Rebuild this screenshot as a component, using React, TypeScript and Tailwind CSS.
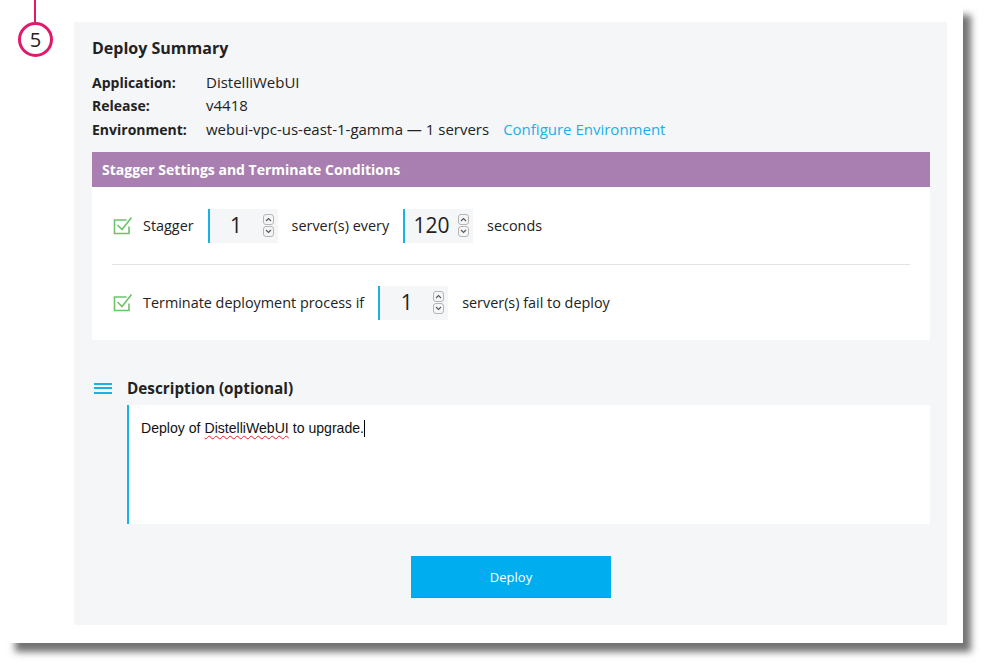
import React from 'react';

function CheckIcon() {
  return (
    <svg width="20" height="19" viewBox="0 0 20 19" fill="none" className="shrink-0 ml-[1px]">
      <path d="M13.5 4H1.5V17.5H16V10.5" stroke="#6cc36c" strokeWidth="1.6" />
      <path d="M4.5 9L9 13.5L18.5 1.5" stroke="#6cc36c" strokeWidth="1.6" />
    </svg>
  );
}

function Spinner() {
  return (
    <div className="flex flex-col gap-[1px]">
      <div className="w-[11px] h-[11px] rounded-[3px] border border-[#b5b5b5] flex items-center justify-center">
        <svg width="7" height="5" viewBox="0 0 7 5" fill="none">
          <path d="M1 4L3.5 1.5L6 4" stroke="#555" strokeWidth="1.1" />
        </svg>
      </div>
      <div className="w-[11px] h-[11px] rounded-[3px] border border-[#b5b5b5] flex items-center justify-center">
        <svg width="7" height="5" viewBox="0 0 7 5" fill="none">
          <path d="M1 1L3.5 3.5L6 1" stroke="#555" strokeWidth="1.1" />
        </svg>
      </div>
    </div>
  );
}

function NumberBox({ value }: { value: string }) {
  return (
    <div className="w-[70px] h-[34px] bg-[#f5f6f8] border-l-2 border-[#1ab0e8] flex items-center pr-[4px]">
      <span className="flex-1 text-center text-[21px] text-[#222] leading-none">{value}</span>
      <Spinner />
    </div>
  );
}

export default function App() {
  return (
    <div className="w-[986px] h-[666px] bg-white relative font-['Open_Sans',sans-serif] text-[#222]">
      {/* step marker */}
      <div className="absolute left-[34px] top-0 w-[2px] h-[22px] bg-[#e0196b] z-10" />
      <div className="absolute left-[18px] top-[22px] w-[35px] h-[35px] rounded-full border-[3px] border-[#e0196b] bg-white flex items-center justify-center text-[20px] leading-none z-10">
        5
      </div>

      <div className="absolute left-[7px] top-[6px] w-[956px] h-[637px] bg-white shadow-[8px_9px_7px_rgba(0,0,0,0.55)] pl-[67px] pt-[16px]">
        <div className="w-[873px] h-[603px] bg-[#f5f6f8] pl-[18px] pr-[17px] pt-[15px] flex flex-col">
          <h2 className="text-[16px] font-bold leading-[22px]">Deploy Summary</h2>

          <div className="mt-[11px] flex flex-col">
            <div className="flex items-center h-[24px]">
              <span className="w-[114px] font-bold text-[14px]">Application:</span>
              <span className="text-[15px]">DistelliWebUI</span>
            </div>
            <div className="flex items-center h-[23px]">
              <span className="w-[114px] font-bold text-[14px]">Release:</span>
              <span className="text-[15px]">v4418</span>
            </div>
            <div className="flex items-center h-[25px]">
              <span className="w-[114px] font-bold text-[14px]">Environment:</span>
              <span className="text-[15px]">webui-vpc-us-east-1-gamma — 1 servers</span>
              <span className="ml-[14px] text-[15px] text-[#1ab0e8]">Configure Environment</span>
            </div>
          </div>

          <div className="mt-[10px] h-[35px] bg-[#a87fb0] flex items-center px-[10px] text-white text-[14px] font-bold">
            Stagger Settings and Terminate Conditions
          </div>

          <div className="bg-white h-[153px] px-[20px] flex flex-col text-[14.4px]">
            <div className="flex items-center h-[77px]">
              <CheckIcon />
              <span className="ml-[10px] mr-[14px]">Stagger</span>
              <NumberBox value="1" />
              <span className="ml-[14px] mr-[14px]">server(s) every</span>
              <NumberBox value="120" />
              <span className="ml-[14px]">seconds</span>
            </div>
            <div className="h-px bg-[#e3e3e3]" />
            <div className="flex items-center h-[75px]">
              <CheckIcon />
              <span className="ml-[10px] mr-[14px]">Terminate deployment process if</span>
              <NumberBox value="1" />
              <span className="ml-[14px]">server(s) fail to deploy</span>
            </div>
          </div>

          <div className="mt-[38px] flex items-center h-[20px]">
            <div className="w-[35px] pl-[2px] flex flex-col gap-[2.5px]">
              <div className="w-[18px] h-[2px] bg-[#1ab0e8]" />
              <div className="w-[18px] h-[2px] bg-[#1ab0e8]" />
              <div className="w-[18px] h-[2px] bg-[#1ab0e8]" />
            </div>
            <span className="text-[15.3px] font-bold">Description (optional)</span>
          </div>

          <div className="ml-[35px] mt-[7px] h-[119px] bg-white border-l-2 border-[#1ab0e8] px-[12px] pt-[13px] font-['Liberation_Sans',Arial,sans-serif] text-[14.1px] text-[#111]">
            Deploy of{' '}
            <span className="underline decoration-wavy decoration-[#e02020] decoration-1 underline-offset-2">DistelliWebUI</span>{' '}
            to upgrade.<span className="inline-block w-px h-[17px] bg-black align-middle -mt-[2px]" />
          </div>

          <div className="flex justify-center mt-[32px]">
            <button className="w-[200px] h-[42px] bg-[#00aeef] border-b border-[#0a9fd6] text-white text-[13px] pt-[2px]">
              Deploy
            </button>
          </div>
        </div>
      </div>
    </div>
  );
}
